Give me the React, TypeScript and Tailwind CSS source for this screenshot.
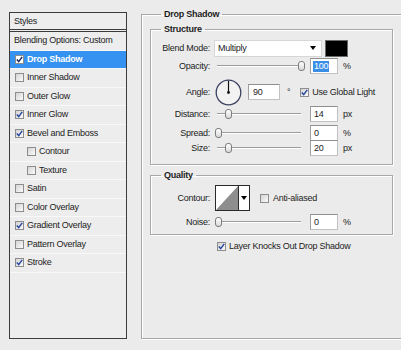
import React from "react";

interface StyleRow {
  label: string;
  checked?: boolean;
  active?: boolean;
  indent?: boolean;
  plain?: boolean;
}

const styleRows: StyleRow[] = [
  { label: "Blending Options: Custom", plain: true },
  { label: "Drop Shadow", checked: true, active: true },
  { label: "Inner Shadow" },
  { label: "Outer Glow" },
  { label: "Inner Glow", checked: true },
  { label: "Bevel and Emboss", checked: true },
  { label: "Contour", indent: true },
  { label: "Texture", indent: true },
  { label: "Satin" },
  { label: "Color Overlay" },
  { label: "Gradient Overlay", checked: true },
  { label: "Pattern Overlay" },
  { label: "Stroke", checked: true },
];

// slider rows: pos is 0..1 along the track
const structureSliders = [
  { label: "Distance:", value: "14", unit: "px", pos: 0.13 },
  { label: "Spread:", value: "0", unit: "%", pos: 0 },
  { label: "Size:", value: "20", unit: "px", pos: 0.13 },
];

const Check: React.FC<{ checked?: boolean; white?: boolean }> = ({ checked, white }) => (
  <span
    className={
      "flex h-[9px] w-[9px] shrink-0 items-center justify-center border border-[#8d8d8d] " +
      (white ? "bg-white" : "bg-gradient-to-br from-[#d4d4d4] to-[#fbfbfb]")
    }
  >
    {checked && (
      <svg width="7" height="7" viewBox="0 0 7 7">
        <path d="M0.8 3.6 L2.7 5.6 L6.2 0.9" fill="none" stroke={white ? "#1b2a5a" : "#2a4aa0"} strokeWidth="1.5" />
      </svg>
    )}
  </span>
);

const Slider: React.FC<{ pos: number }> = ({ pos }) => (
  <div className="relative ml-[7px] h-[12px] w-[84px]">
    <div className="absolute left-0 right-0 top-[5px] h-[1px] bg-[#9c9c9c]" />
    <div className="absolute left-0 right-0 top-[6px] h-[1px] bg-white" />
    <div
      className="absolute top-[1px] h-[10px] w-[7px] rounded-[3px] border border-[#7c7c7c] bg-gradient-to-b from-white to-[#d9d9d9]"
      style={{ left: pos * 83 - 2.5 }}
    />
  </div>
);

const Field: React.FC<{ value: string; selected?: boolean }> = ({ value, selected }) => (
  <div className="flex h-[16px] w-[28px] items-center border border-[#c2c2c2] border-t-[#8f8f8f] border-l-[#a0a0a0] bg-white pl-[2px]">
    <span className={selected ? "bg-[#3a8ee6] px-[1px] text-white" : "px-[1px]"}>{value}</span>
  </div>
);

const Label: React.FC<{ text: string }> = ({ text }) => (
  <div className="w-[59px] shrink-0 text-right">{text}</div>
);

const App: React.FC = () => {
  return (
    <div
      className="flex h-[350px] w-[401px] overflow-hidden bg-[#ebebeb] text-[9px] leading-[11px] tracking-[-0.25px] text-[#1c1c1c]"
      style={{ fontFamily: '"Liberation Sans", Arial, sans-serif' }}
    >
      {/* Styles list */}
      <div className="ml-[9px] mt-[12px] flex h-[327px] w-[118px] shrink-0 flex-col border border-[#3c3c3c] bg-[#ededed]">
        <div className="flex h-[17px] items-center border-b border-[#3c3c3c] pl-[4px]">Styles</div>
        <div className="mt-[1px] border-t border-[#3c3c3c]">
          {styleRows.map((row, i) => (
            <div
              key={i}
              className={
                "flex h-[18.5px] items-center border-b border-[#f8f8f8] " +
                (row.active ? "bg-[#3592f0] font-bold text-white " : "") +
                (row.plain ? "pl-[4px]" : row.indent ? "pl-[17px]" : "pl-[5px]")
              }
            >
              {!row.plain && <Check checked={row.checked} white={row.active} />}
              <span className={row.plain ? "" : "ml-[3px]"}>{row.label}</span>
            </div>
          ))}
        </div>
      </div>

      {/* Drop Shadow settings */}
      <fieldset className="ml-[14px] mt-[9px] h-[330px] w-[262px] shrink-0 border border-[#a8a8a8] pl-[8px] shadow-[inset_1px_1px_0_#fff,1px_1px_0_#fff]">
        <legend className="ml-[11px] px-[3px] font-bold leading-[11px]">Drop Shadow</legend>

        <fieldset className="mt-[4px] w-[243px] border border-[#a8a8a8] pb-[9px] shadow-[inset_1px_1px_0_#fff,1px_1px_0_#fff]">
          <legend className="ml-[10px] px-[3px] font-bold leading-[11px]">Structure</legend>

          <div className="mt-[4px] flex h-[18px] items-center">
            <Label text="Blend Mode:" />
            <div className="ml-[4px] flex h-[17px] w-[108px] items-center justify-between border border-[#d6d6d6] bg-white pl-[3px] pr-[5px]">
              <span>Multiply</span>
              <span className="h-0 w-0 border-x-[3.5px] border-t-[4px] border-x-transparent border-t-black" />
            </div>
            <div className="ml-[3px] h-[17px] w-[23px] border border-[#6a6a6a] bg-black" />
          </div>

          <div className="mt-[1px] flex h-[16px] items-center">
            <Label text="Opacity:" />
            <Slider pos={1} />
            <div className="ml-[9px]">
              <Field value="100" selected />
            </div>
            <span className="ml-[5px]">%</span>
          </div>

          <div className="mt-[4px] flex h-[28px] items-center">
            <Label text="Angle:" />
            <svg className="ml-[5px]" width="27" height="27" viewBox="0 0 27 27">
              <circle cx="13.5" cy="13.5" r="12.3" fill="#f2f2f2" stroke="#3d4262" strokeWidth="1.3" />
              <line x1="13.5" y1="13.5" x2="13.5" y2="1.8" stroke="#111" strokeWidth="1.2" />
              <circle cx="13.5" cy="13.5" r="1.4" fill="#111" />
            </svg>
            <div className="ml-[6px] flex h-[16px] w-[32px] items-center border border-[#c2c2c2] border-t-[#8f8f8f] border-l-[#a0a0a0] bg-white pl-[4px]">
              90
            </div>
            <span className="ml-[7px]">°</span>
            <span className="ml-[10px]">
              <Check checked />
            </span>
            <span className="ml-[3px]">Use Global Light</span>
          </div>

          {structureSliders.map((s, i) => (
            <div
              key={s.label}
              className={"flex items-center " + (i === 1 ? "mt-[3px] h-[16px]" : i === 2 ? "h-[14px]" : "h-[16px]")}
            >
              <Label text={s.label} />
              <Slider pos={s.pos} />
              <div className="ml-[9px]">
                <Field value={s.value} />
              </div>
              <span className="ml-[5px]">{s.unit}</span>
            </div>
          ))}
        </fieldset>

        <fieldset className="mt-[5px] w-[243px] border border-[#a8a8a8] pb-[4px] shadow-[inset_1px_1px_0_#fff,1px_1px_0_#fff]">
          <legend className="ml-[10px] px-[3px] font-bold leading-[11px]">Quality</legend>

          <div className="mt-[4px] flex h-[26px] items-center">
            <Label text="Contour:" />
            <div className="ml-[5px] flex h-[26px] w-[35px] border border-[#2a2a2a] bg-white">
              <svg width="22" height="24" viewBox="0 0 22 24">
                <rect width="22" height="24" fill="#fff" />
                <polygon points="0,24 22,0 22,24" fill="#8e8e8e" />
              </svg>
              <div className="flex flex-1 items-center justify-center border-l border-[#2a2a2a]">
                <span className="h-0 w-0 border-x-[3px] border-t-[4px] border-x-transparent border-t-black" />
              </div>
            </div>
            <span className="ml-[10px]">
              <Check />
            </span>
            <span className="ml-[4px]">Anti-aliased</span>
          </div>

          <div className="mt-[3px] flex h-[16px] items-center">
            <Label text="Noise:" />
            <Slider pos={0} />
            <div className="ml-[9px]">
              <Field value="0" />
            </div>
            <span className="ml-[5px]">%</span>
          </div>
        </fieldset>

        <div className="mt-[5px] flex h-[12px] items-center pl-[67px]">
          <Check checked />
          <span className="ml-[3px]">Layer Knocks Out Drop Shadow</span>
        </div>
      </fieldset>
    </div>
  );
};

export default App;
